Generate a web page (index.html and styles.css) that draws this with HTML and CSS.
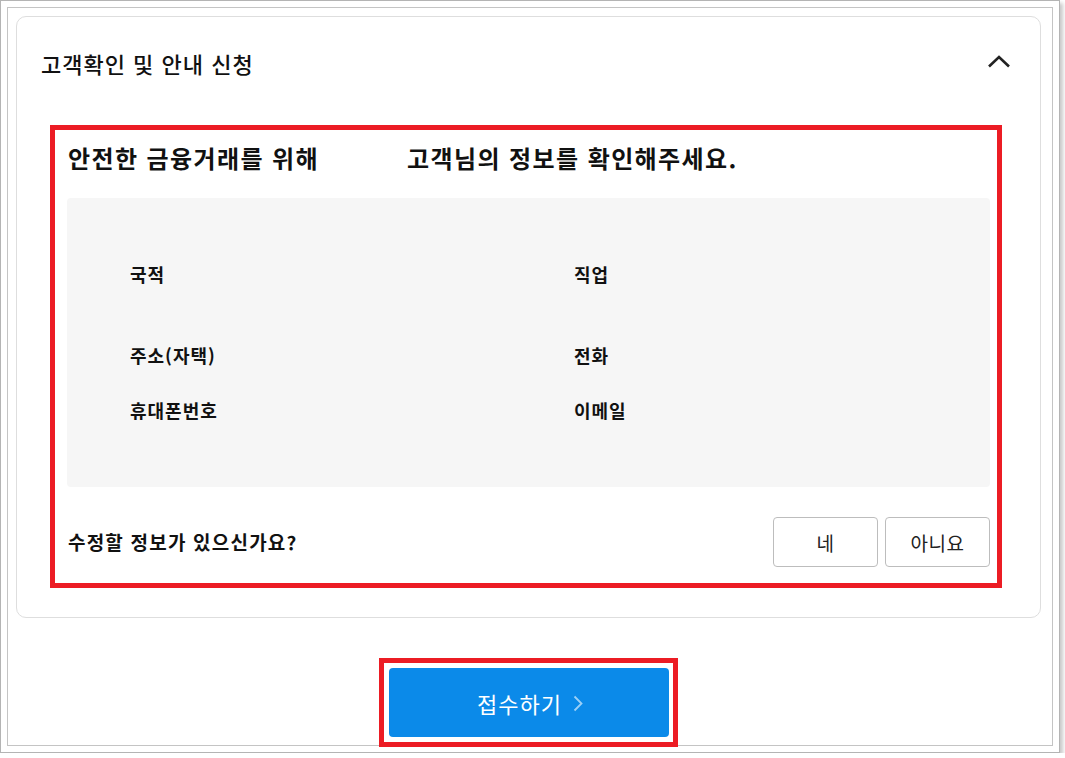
FILE: index.html
```html
<!DOCTYPE html>
<html lang="ko">
<head>
<meta charset="utf-8">
<title>고객확인 및 안내 신청</title>
<link rel="stylesheet" href="styles.css">
</head>
<body>
<div class="window">
  <div class="frame">
    <section class="card">
      <header class="card-head">
        <h2 class="card-title">고객확인 및 안내 신청</h2>
        <svg class="chevron" width="24" height="14" viewBox="0 0 24 14" aria-hidden="true">
          <polyline points="2,12.5 12,3 22,12.5" fill="none" stroke="#222" stroke-width="2.6" stroke-linecap="butt" stroke-linejoin="miter"/>
        </svg>
      </header>
      <div class="mark-box">
        <h3 class="lead"><span>안전한 금융거래를 위해</span><span>고객님의 정보를 확인해주세요.</span></h3>
        <div class="info">
          <div class="info-grid">
            <div class="label">국적</div>
            <div class="label">직업</div>
            <div class="label">주소(자택)</div>
            <div class="label">전화</div>
            <div class="label">휴대폰번호</div>
            <div class="label">이메일</div>
          </div>
        </div>
        <div class="ask">
          <p class="ask-text">수정할 정보가 있으신가요?</p>
          <div class="ask-btns">
            <button class="btn-line">네</button>
            <button class="btn-line">아니요</button>
          </div>
        </div>
      </div>
    </section>
    <div class="submit-wrap">
      <div class="mark-submit">
        <button class="btn-submit">접수하기<svg class="arrow" width="10" height="17" viewBox="0 0 10 17" aria-hidden="true"><polyline points="1.5,1.5 8.5,8.5 1.5,15.5" fill="none" stroke="rgba(255,255,255,0.6)" stroke-width="1.8"/></svg></button>
      </div>
    </div>
  </div>
</div>
</body>
</html>
```

FILE: styles.css
```css
* { box-sizing: border-box; }
html, body { margin: 0; padding: 0; background: #ffffff; }
body {
  font-family: "Noto Sans CJK KR", "Noto Sans", sans-serif;
  color: #111;
}
.window {
  width: 1060px;
  height: 753px;
  border: 1px solid #b4b4b4;
  padding: 6px;
  background: #fff;
  box-shadow: 3px 3px 4px rgba(0,0,0,0.22);
}
.frame {
  width: 1046px;
  height: 739px;
  border: 1px solid #c4c4c4;
  padding: 8px 0 0 8px;
}
.card {
  width: 1025px;
  height: 602px;
  border: 1px solid #dedede;
  border-radius: 10px;
  padding: 0 0 0 33px;
}
.card-head {
  height: 108px;
  display: flex;
  align-items: center;
  justify-content: space-between;
  margin-left: -9px;
  padding-right: 29px;
}
.card-title {
  margin: 0;
  font-size: 22px;
  letter-spacing: 1px;
  line-height: 28px;
  font-weight: 500;
  color: #111;
  position: relative;
  top: -8px;
}
.chevron {
  position: relative;
  top: -10px;
}
.mark-box {
  width: 952px;
  height: 463px;
  border: 5px solid #ec1c24;
  padding: 16px 7px 0 12px;
}
.lead {
  margin: 0 0 28px 1px;
  font-size: 24px;
  letter-spacing: 1.4px;
  line-height: 24px;
  font-weight: 700;
  display: flex;
  gap: 88px;
}
.info {
  height: 289px;
  background: #f6f6f6;
  border-radius: 4px;
  padding: 64px 0 0 63px;
}
.info-grid {
  display: grid;
  grid-template-columns: 444px 1fr;
  grid-template-rows: 81px 55px 24px;
}
.label {
  font-size: 18px;
  letter-spacing: 1px;
  line-height: 24px;
  font-weight: 700;
  color: #111;
}
.ask {
  display: flex;
  align-items: center;
  justify-content: space-between;
  padding-top: 30px;
}
.ask-text {
  margin: 0 0 0 1px;
  font-size: 19px;
  letter-spacing: 1.2px;
  line-height: 24px;
  font-weight: 700;
  color: #111;
}
.ask-btns {
  display: flex;
  gap: 7px;
}
.btn-line {
  width: 105px;
  height: 50px;
  border: 1px solid #bdbdbd;
  border-radius: 4px;
  background: #fff;
  font-family: inherit;
  font-size: 19px;
  letter-spacing: 0.5px;
  color: #222;
  padding: 0;
}
.submit-wrap {
  display: flex;
  justify-content: center;
  width: 1025px;
  padding-top: 40px;
}
.mark-submit {
  border: 5px solid #ec1c24;
  padding: 5px 4px 5px 5px;
}
.btn-submit {
  display: flex;
  align-items: center;
  justify-content: center;
  gap: 11px;
  width: 280px;
  height: 69px;
  border: 0;
  border-radius: 4px;
  background: #0b8ae9;
  color: #fff;
  font-family: inherit;
  font-size: 22px;
  letter-spacing: 1px;
  padding: 0 0 0 2px;
}
.arrow {
  display: block;
  margin-top: 2px;
}
```
